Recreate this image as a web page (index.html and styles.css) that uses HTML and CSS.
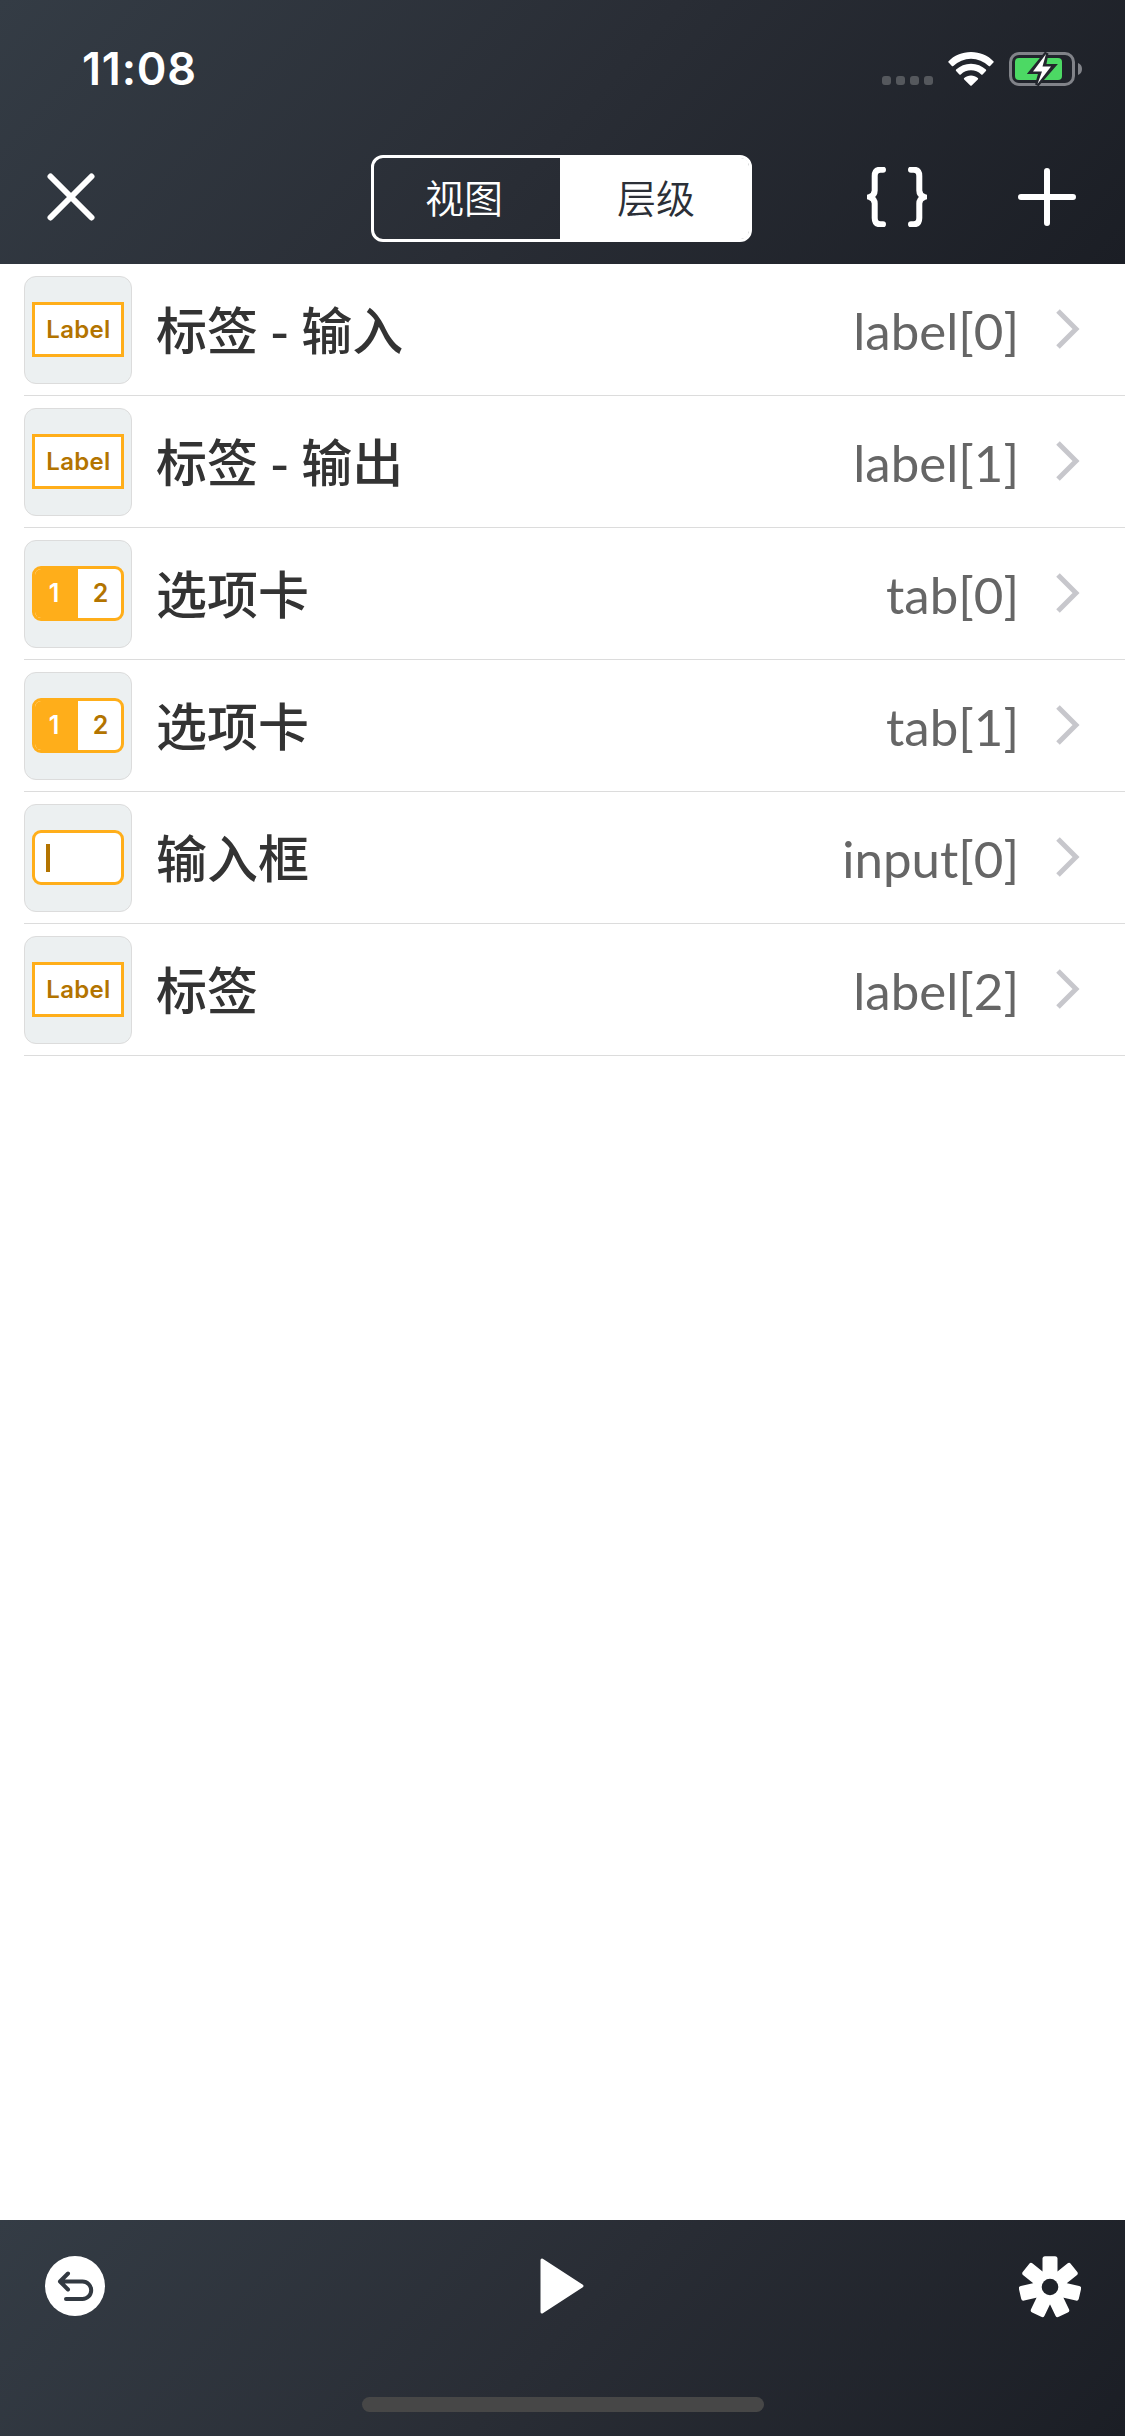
FILE: index.html
```html
<!DOCTYPE html>
<html lang="zh-CN">
<head>
<meta charset="utf-8">
<title>层级</title>
<link rel="stylesheet" href="styles.css">
</head>
<body>
<div class="app">
  <header class="top">
    <div class="status">
      <span class="time">11:08</span>
      <span class="status-icons">
        <svg class="dots" width="51" height="9" viewBox="0 0 51 9"><rect width="9" height="9" rx="3"/><rect x="14" width="9" height="9" rx="3"/><rect x="28" width="9" height="9" rx="3"/><rect x="42" width="9" height="9" rx="3"/></svg>
        <svg class="wifi" width="46" height="34" viewBox="0 0 46 34"><path d="M23 0C14 0 6 3.500.6 9.200a1 1 0 0 0 0 1.400L3.900 14a1 1 0 0 0 1.400 0A25.500 25.500 0 0 1 40.700 14a1 1 0 0 0 1.400 0l3.300-3.400a1 1 0 0 0 0-1.400C40 3.500 32 0 23 0z"/><path d="M23 11.700c-5.800 0-11 2.200-14.900 5.900a1 1 0 0 0 0 1.400l3.300 3.400a1 1 0 0 0 1.400 0 14.800 14.800 0 0 1 20.400 0 1 1 0 0 0 1.400 0l3.300-3.400a1 1 0 0 0 0-1.400c-3.900-3.700-9.100-5.900-14.900-5.900z"/><path d="M23 23.500c-2.600 0-5 .9-6.800 2.500a1 1 0 0 0 0 1.400l6.100 6a1 1 0 0 0 1.400 0l6.100-6a1 1 0 0 0 0-1.400c-1.800-1.600-4.200-2.500-6.800-2.500z"/></svg>
        <svg class="battery" width="74" height="38" viewBox="0 0 74 38"><rect class="shell" x="1.500" y="3.500" width="63" height="31" rx="8.500"/><path class="cap" d="M69 13a6.500 6.500 0 0 1 0 12z"/><rect class="charge" x="6" y="8" width="47" height="22" rx="4"/><path class="bolt-gap" d="M37.500 3 22 22h9.500L28 35 44.500 16H35z"/><path class="bolt" d="M37 4 24 21.500h9L28.500 34 42 16.500h-8.500z"/></svg>
      </span>
    </div>
    <nav class="nav">
      <svg class="close" width="48" height="48" viewBox="0 0 48 48"><path d="M3.500 3.500l41 41M44.500 3.500l-41 41"/></svg>
      <div class="tabs"><span class="tab">视图</span><span class="tab tab-on">层级</span></div>
      <svg class="braces" width="60" height="60" viewBox="0 0 60 60"><path d="M16 2.700h-2.500Q7.700 2.700 7.700 9v14.500q0 4.500-5 6.500 5 2 5 6.500V51q0 6.300 5.800 6.300H16M44 2.700h2.500q5.800 0 5.800 6.300v14.500q0 4.500 5 6.500-5 2-5 6.500V51q0 6.300-5.800 6.300H44"/></svg>
      <svg class="plus" width="58" height="58" viewBox="0 0 58 58"><path d="M29 3v52M3 29h52"/></svg>
    </nav>
  </header>
  <main class="list">
    <div class="row"><span class="tile"><span class="glyph">Label</span></span><span class="name">标签 - 输入</span><span class="ref">label[0]</span><svg class="chevron" width="24" height="40" viewBox="0 0 24 40"><path d="M2 2l18 18L2 38"/></svg></div>
    <div class="row"><span class="tile"><span class="glyph">Label</span></span><span class="name">标签 - 输出</span><span class="ref">label[1]</span><svg class="chevron" width="24" height="40" viewBox="0 0 24 40"><path d="M2 2l18 18L2 38"/></svg></div>
    <div class="row"><span class="tile"><span class="glyph glyph-tabs"><b class="one">1</b><b class="two">2</b></span></span><span class="name">选项卡</span><span class="ref">tab[0]</span><svg class="chevron" width="24" height="40" viewBox="0 0 24 40"><path d="M2 2l18 18L2 38"/></svg></div>
    <div class="row"><span class="tile"><span class="glyph glyph-tabs"><b class="one">1</b><b class="two">2</b></span></span><span class="name">选项卡</span><span class="ref">tab[1]</span><svg class="chevron" width="24" height="40" viewBox="0 0 24 40"><path d="M2 2l18 18L2 38"/></svg></div>
    <div class="row"><span class="tile"><span class="glyph glyph-input"><i class="caret"></i></span></span><span class="name">输入框</span><span class="ref">input[0]</span><svg class="chevron" width="24" height="40" viewBox="0 0 24 40"><path d="M2 2l18 18L2 38"/></svg></div>
    <div class="row"><span class="tile"><span class="glyph">Label</span></span><span class="name">标签</span><span class="ref">label[2]</span><svg class="chevron" width="24" height="40" viewBox="0 0 24 40"><path d="M2 2l18 18L2 38"/></svg></div>
  </main>
  <footer class="bottom">
    <div class="tools">
      <svg class="undo" width="60" height="60" viewBox="0 0 60 60"><circle cx="30" cy="30" r="30"/><path d="M23 17.500l-8 8 8 8M16 25.500h21.500a8.700 8.700 0 0 1 0 17.400H21"/></svg>
      <svg class="play" width="44" height="56" viewBox="0 0 44 56"><path d="M2 2v52l40-26z"/></svg>
      <svg class="gear" width="62" height="62" viewBox="-31 -31 62 62">
        <defs><mask id="hub"><rect x="-31" y="-31" width="62" height="62" fill="#fff"/><circle r="8.300" fill="#000"/></mask><rect id="tooth" x="-7.500" y="-30.700" width="15" height="32" rx="2.500"/></defs>
        <g mask="url(#hub)"><circle r="17"/><use href="#tooth"/><use href="#tooth" transform="rotate(51.430)"/><use href="#tooth" transform="rotate(102.860)"/><use href="#tooth" transform="rotate(154.290)"/><use href="#tooth" transform="rotate(205.710)"/><use href="#tooth" transform="rotate(257.140)"/><use href="#tooth" transform="rotate(308.570)"/></g>
      </svg>
    </div>
    <div class="home"></div>
  </footer>
</div>
</body>
</html>
```
FILE: styles.css
```css
* { box-sizing: border-box; }
body { margin: 0; background: #fff; }
svg { display: block; flex: none; }

.app { width: 1125px; height: 2436px; display: flex; flex-direction: column; }

.top, .bottom { flex: none; background: linear-gradient(132deg, #343c45, #292d35 50%, #1b1e25); color: #fff; }
.top { height: 264px; }

.status { height: 132px; display: flex; justify-content: space-between; padding: 41px 42px 0 82px; }
.time { font: 600 45px/56px Inter, sans-serif; letter-spacing: .8px; }
.status-icons { display: flex; align-items: flex-start; }
.dots { margin: 35px 15px 0 0; fill: #55585d; }
.wifi { margin: 11px 15px 0 0; fill: #fff; }
.battery { margin-top: 9px; }
.shell { fill: none; stroke: #818389; stroke-width: 3; }
.cap { fill: #818389; }
.charge { fill: #4cd964; }
.bolt-gap { fill: #23262d; stroke: #23262d; stroke-width: 4; }
.bolt { fill: #fff; }

.nav { height: 132px; display: flex; align-items: flex-start; }
.nav path { fill: none; stroke: #fff; stroke-width: 6; stroke-linecap: round; }
.close { margin: 41px 0 0 47px; }
.tabs { width: 381px; height: 87px; margin: 23px 0 0 276px; display: flex; border: 3px solid #fff; border-radius: 12px; }
.tab { width: 186px; padding-right: 6px; text-align: center; font: 350 39px/76px "Noto Sans CJK SC", sans-serif; }
.tab-on { flex: 1; padding: 0 0 0 3px; background: #fff; color: #2b2f37; border-radius: 0 8px 8px 0; }
.braces { margin: 35px 0 0 115px; }
.plus { margin: 36px 0 0 91px; }

.list { flex: 1; }
.row { height: 132px; margin-left: 24px; padding-right: 45px; display: flex; align-items: center; border-bottom: 1px solid #dcdcdc; }
.tile { width: 108px; height: 108px; display: flex; align-items: center; justify-content: center; background: #ecf0f1; border: 1px solid #dcdcdc; border-radius: 12px; }
.glyph { width: 92px; height: 55px; display: flex; align-items: center; justify-content: center; overflow: hidden; background: #fff; border: 3px solid #ffae1a; color: #b37400; font: 600 24px/30px Inter, sans-serif; letter-spacing: .3px; padding-left: 1px; }
.glyph-tabs, .glyph-input { border-radius: 9px; padding: 0; }
.glyph b { width: 43px; font-size: 25px; font-weight: 600; text-align: center; line-height: 49px; letter-spacing: 0; }
.glyph .one { padding-right: 5px; background: #ffae1a; color: #fff; }
.glyph .two { padding-left: 2px; }
.glyph-input { justify-content: flex-start; }
.caret { width: 4px; height: 28px; margin-left: 11px; background: #b37400; }
.name { flex: 1; margin-left: 24px; padding-bottom: 4px; color: #333; font: 500 51px/72px "Noto Sans CJK SC", sans-serif; word-spacing: 1px; }
.ref { color: #666; font: 400 51px/62px Lato, sans-serif; padding-top: 2px; }
.chevron { margin: 0 0 2px 37px; fill: none; stroke: #c7c7cc; stroke-width: 5; }

.bottom { height: 216px; }
.tools { height: 177px; padding: 36px 44px 0 45px; display: flex; justify-content: space-between; align-items: flex-start; }
.undo circle { fill: #fff; }
.undo path { fill: none; stroke: #323941; stroke-width: 4; stroke-linecap: round; stroke-linejoin: round; }
.play { margin-top: 2px; fill: #fff; stroke: #fff; stroke-width: 3; stroke-linejoin: round; }
.gear { fill: #fff; }
.home { width: 402px; height: 15px; margin: 0 auto; border-radius: 8px; background: #474747; }
```
